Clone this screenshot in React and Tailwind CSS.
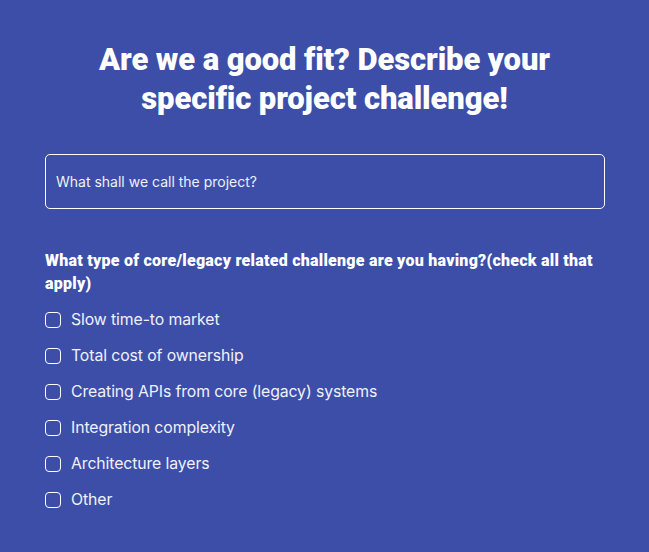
const options = [
  'Slow time-to market',
  'Total cost of ownership',
  'Creating APIs from core (legacy) systems',
  'Integration complexity',
  'Architecture layers',
  'Other',
];

export default function App() {
  return (
    <div className="min-h-[552px] w-[649px] bg-[#3c4ea7] px-[45px] pt-[40px] pb-8 text-white">
      <h1 className="text-center font-['Roboto',sans-serif] text-[31px] font-black leading-[39px] tracking-[-0.1px]">
        Are we a good fit? Describe your
        <br />
        specific project challenge!
      </h1>

      <div className="mt-[36px]">
        <input
          type="text"
          placeholder="What shall we call the project?"
          className="h-[55px] w-[560px] rounded-[5px] border border-white bg-transparent px-[10px] font-['Inter',sans-serif] text-[14px] text-white placeholder-[#eef0fb] outline-none"
        />
      </div>

      <p className="mt-[40px] font-['Roboto',sans-serif] text-[16px] font-black leading-[23px] tracking-[0.25px]">
        What type of core/legacy related challenge are you having?(check all that apply)
      </p>

      <div className="mt-[14px] flex flex-col gap-[14px]">
        {options.map((opt) => (
          <label key={opt} className="flex h-[22px] items-center gap-[10px]">
            <span className="h-[16px] w-[16px] shrink-0 rounded-[4px] border-[1.5px] border-white" />
            <span className="font-['Inter',sans-serif] text-[15.8px] leading-[22px] tracking-[-0.1px] text-[#f0f1fb]">{opt}</span>
          </label>
        ))}
      </div>
    </div>
  );
}
